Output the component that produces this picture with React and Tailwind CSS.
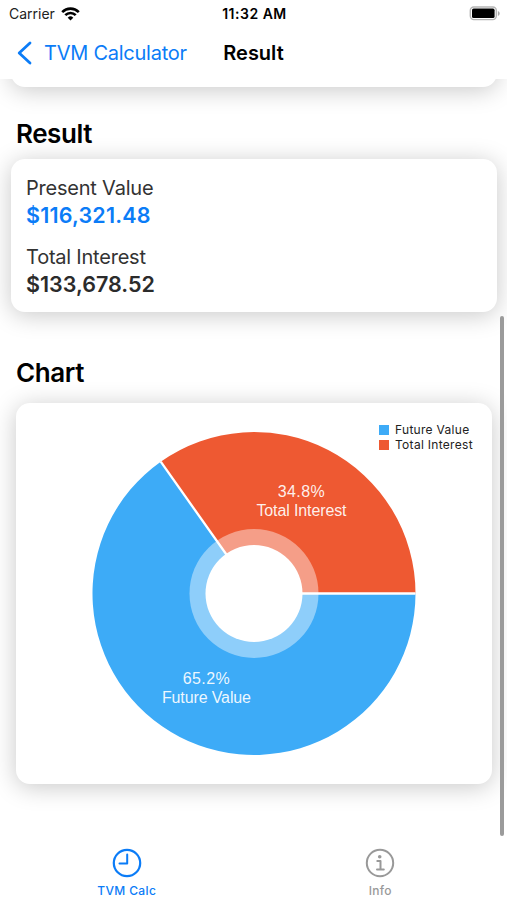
const CARD_SHADOW = 'shadow-[0_3px_24px_rgba(0,0,0,0.22)]'

const CENTER = { x: 238, y: 190.5 }
const RADIUS = 161.5

const SLICES = [
  { name: 'Future Value', percent: 65.2, color: '#3dabf7', labelX: 190.4, labelY: 280.5 },
  { name: 'Total Interest', percent: 34.8, color: '#ee5932', labelX: 285.4, labelY: 93.5 }
]

const pointAt = (percent) => {
  const angle = (percent / 100) * Math.PI * 2
  return [CENTER.x + RADIUS * Math.cos(angle), CENTER.y + RADIUS * Math.sin(angle)]
}

function StatusBar() {
  return (
    <div className="grid h-[27px] grid-cols-3 items-center pr-[7px] pl-[9px] text-[14px] text-[#222]">
      <div className="flex items-center gap-[6px]">
        <span>Carrier</span>
        <svg width="19" height="14" viewBox="0 0 19 14" fill="none" stroke="#000" strokeWidth="2.6">
          <path d="M1.2 5.1a11.7 11.7 0 0 1 16.6 0" />
          <path d="M4.3 8.2a7.3 7.3 0 0 1 10.4 0" />
          <path d="M9.5 13.5 6.7 10.7a4 4 0 0 1 5.6 0Z" fill="#000" stroke="none" />
        </svg>
      </div>
      <span className="text-center font-semibold tracking-[0.5px] whitespace-nowrap text-black">11:32 AM</span>
      <svg className="justify-self-end" width="31" height="15" viewBox="0 0 31 15">
        <rect x="1.3" y="1" width="26" height="12.6" rx="3.5" fill="#fff" stroke="#b5b5b5" strokeWidth="1.4" />
        <rect x="3" y="2.6" width="22.6" height="9.4" rx="1.6" fill="#000" />
        <path d="M28.9 4.9v5c1.1-.5 1.8-1.4 1.8-2.5s-.7-2-1.8-2.5Z" fill="#aaa" />
      </svg>
    </div>
  )
}

function NavBar() {
  return (
    <div className="relative flex h-[52px] items-center pl-[17px] text-[20px]">
      <button className="flex items-center text-[#0b7cf7]">
        <svg width="15" height="24" viewBox="0 0 15 24" fill="none" stroke="currentColor" strokeWidth="2.8" strokeLinecap="round" strokeLinejoin="round">
          <path d="M13 2 2.2 12 13 22" />
        </svg>
        <span className="ml-3 tracking-[-0.25px]">TVM Calculator</span>
      </button>
      <h1 className="pointer-events-none absolute inset-x-0 text-center font-semibold">Result</h1>
    </div>
  )
}

function ResultRow({ label, value, valueClass }) {
  return (
    <div>
      <p className="text-[20px] leading-[27px] tracking-[-0.22px] text-[#333]">{label}</p>
      <p className={`text-[21.5px] leading-[27px] font-semibold ${valueClass}`}>{value}</p>
    </div>
  )
}

function PieChart() {
  const [splitX, splitY] = pointAt(SLICES[0].percent)
  const [startX, startY] = pointAt(0)

  return (
    <svg className="block" width="476" height="381" viewBox="0 0 476 381">
      <path
        d={`M${CENTER.x} ${CENTER.y}L${startX} ${startY}A${RADIUS} ${RADIUS} 0 1 1 ${splitX} ${splitY}Z`}
        fill={SLICES[0].color}
      />
      <path
        d={`M${CENTER.x} ${CENTER.y}L${splitX} ${splitY}A${RADIUS} ${RADIUS} 0 0 1 ${startX} ${startY}Z`}
        fill={SLICES[1].color}
      />
      <path
        d={`M${splitX} ${splitY}L${CENTER.x} ${CENTER.y}L${startX} ${startY}`}
        fill="none"
        stroke="#fff"
        strokeWidth="2.3"
      />
      <circle cx={CENTER.x} cy={CENTER.y} r="64.5" fill="#fff" fillOpacity="0.42" />
      <circle cx={CENTER.x} cy={CENTER.y} r="48.5" fill="#fff" />

      {SLICES.map((slice) => (
        <g key={slice.name} className="text-[16px] tracking-[-0.12px]" fill="#fff" fillOpacity="0.92" textAnchor="middle" fontFamily="Liberation Sans, sans-serif">
          <text x={slice.labelX} y={slice.labelY} className="tracking-[0.4px]">{slice.percent}%</text>
          <text x={slice.labelX} y={slice.labelY + 19}>{slice.name}</text>
        </g>
      ))}
    </svg>
  )
}

function Legend() {
  return (
    <ul className="absolute top-[20px] left-[363px] text-[12px] tracking-[0.3px] text-[#222]">
      {SLICES.map((slice) => (
        <li key={slice.name} className="flex h-[14.5px] items-center gap-[6px] whitespace-nowrap">
          <span className="size-[10px]" style={{ backgroundColor: slice.color }} />
          {slice.name}
        </li>
      ))}
    </ul>
  )
}

function TabBar() {
  return (
    <nav className="grid h-[64px] grid-cols-2 bg-white text-[12px] font-medium">
      <button className="flex flex-col items-center pt-3 text-[#0b7cf7]">
        <svg width="30" height="30" viewBox="0 0 30 30" fill="none" stroke="currentColor" strokeWidth="2.2">
          <circle cx="15" cy="15" r="13.2" />
          <path d="M15.2 6.5v8.9H7.5" strokeWidth="2" strokeLinecap="round" strokeLinejoin="round" />
        </svg>
        <span className="mt-1 leading-[18px] tracking-[0.35px]">TVM Calc</span>
      </button>
      <button className="flex flex-col items-center pt-3 text-[#999]">
        <svg width="30" height="30" viewBox="0 0 30 30" fill="none" stroke="currentColor" strokeWidth="2">
          <circle cx="15" cy="15" r="13.2" />
          <circle cx="14.7" cy="8.7" r="1.8" fill="currentColor" stroke="none" />
          <path d="M12.3 13h3.2v8.2M12 21.5h6.8" strokeLinecap="round" strokeLinejoin="round" />
        </svg>
        <span className="mt-1 leading-[18px] tracking-[0.3px]">Info</span>
      </button>
    </nav>
  )
}

export default function App() {
  return (
    <div className="flex h-[900px] w-[507px] flex-col overflow-hidden bg-white font-[Inter,sans-serif] text-black">
      <header>
        <StatusBar />
        <NavBar />
      </header>

      <main className="relative flex-1 overflow-hidden">
        {/* bottom edge of the input card, scrolled under the header */}
        <div className={`-mt-[60px] mr-[10px] ml-[11px] h-[68px] rounded-[14px] bg-white ${CARD_SHADOW}`} />

        <h2 className="mt-[29px] ml-4 text-[26px] leading-9 font-semibold tracking-[-0.45px]">Result</h2>
        <section className={`mt-[7px] mr-[10px] ml-[11px] flex h-[153px] flex-col gap-[15px] rounded-[14px] bg-white px-[15px] pt-4 ${CARD_SHADOW}`}>
          <ResultRow label="Present Value" value="$116,321.48" valueClass="text-[#0b7cf7] tracking-[0.18px]" />
          <ResultRow label="Total Interest" value="$133,678.52" valueClass="text-[#2b2b2b]" />
        </section>

        <h2 className="mt-[43px] ml-4 text-[26px] leading-9 font-semibold tracking-[-0.4px]">Chart</h2>
        <section className={`relative mt-3 mr-[15px] ml-4 h-[381px] rounded-[14px] bg-white ${CARD_SHADOW}`}>
          <PieChart />
          <Legend />
        </section>

        <div className="absolute top-[237px] right-[3px] h-[520px] w-[4px] rounded-full bg-[#9b9b9b]" />
      </main>

      <TabBar />
    </div>
  )
}
